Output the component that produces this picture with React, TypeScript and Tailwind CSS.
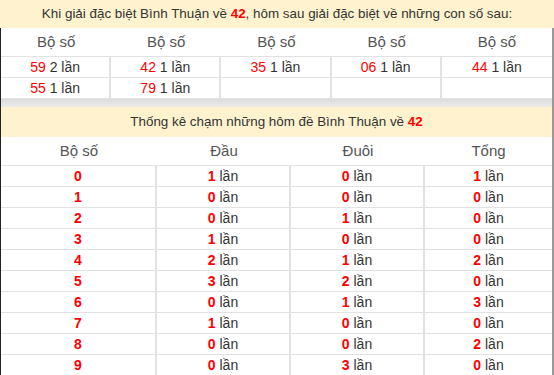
const firstRows: [string, string][][] = [
  [
    ['59', '2'],
    ['42', '1'],
    ['35', '1'],
    ['06', '1'],
    ['44', '1']
  ],
  [
    ['55', '1'],
    ['79', '1']
  ]
]

const stats = [
  ['0', '1', '0', '1'],
  ['1', '0', '0', '0'],
  ['2', '0', '1', '0'],
  ['3', '1', '0', '0'],
  ['4', '2', '1', '2'],
  ['5', '3', '2', '0'],
  ['6', '0', '1', '3'],
  ['7', '1', '0', '0'],
  ['8', '0', '0', '2'],
  ['9', '0', '3', '0']
]

const Count = ({ n }: { n: string }) => (
  <span>
    <span className="text-[#ff0000] font-bold">{n}</span>{' '}
    <span className="text-[#333]">lần</span>
  </span>
)

export default function App() {
  return (
    <div className="w-[554px] h-[375px] overflow-hidden bg-white text-[14px] font-['Liberation_Sans',Arial,sans-serif]">
      <div className="h-[28px] bg-[#fff3cf] flex items-center justify-center text-[13.4px] text-[#333]">
        Khi giải đặc biệt Bình Thuận về&nbsp;
        <span className="text-[#ff0000] font-bold">42</span>, hôm sau giải đặc biệt về những con số sau:
      </div>
      <div className="border-l border-l-[#222] border-r-2 border-r-[#999] w-[554px]">
        <div className="grid grid-cols-5 h-[29px] items-center text-center text-[15px] text-[#555] border-b border-[#e2e2e2]">
          {[0, 1, 2, 3, 4].map((i) => (
            <div key={i}>Bộ số</div>
          ))}
        </div>
        {firstRows.map((row, r) => (
          <div key={r} className="grid grid-cols-5 h-[21px] border-b border-[#e2e2e2]">
            {[0, 1, 2, 3, 4].map((c) => (
              <div
                key={c}
                className={
                  'flex items-center justify-center ' +
                  (c < 4 ? 'border-r-2 border-[#e2e2e2]' : '')
                }
              >
                {row[c] && (
                  <span>
                    <span className="text-[#ff0000]">{row[c][0]}</span>{' '}
                    <span className="text-[#333]">{row[c][1]} lần</span>
                  </span>
                )}
              </div>
            ))}
          </div>
        ))}
        <div className="h-[8px] bg-gradient-to-b from-[#dcdcdc] to-[#ececec]" />
        <div className="h-[30px] bg-[#fff3cf] flex items-center justify-center text-[13.4px] text-[#333]">
          Thống kê chạm những hôm đề Bình Thuận về&nbsp;
          <span className="text-[#ff0000] font-bold">42</span>
        </div>
        <div className="grid grid-cols-[156px_134px_134px_1fr] h-[29px] items-center text-center text-[15px] text-[#555] border-b border-[#e2e2e2]">
          <div>Bộ số</div>
          <div>Đầu</div>
          <div>Đuôi</div>
          <div>Tổng</div>
        </div>
        {stats.map((s) => (
          <div
            key={s[0]}
            className="grid grid-cols-[156px_134px_134px_1fr] h-[21px] border-b border-[#e2e2e2]"
          >
            <div className="flex items-center justify-center border-r-2 border-[#e2e2e2] text-[#ff0000] font-bold">
              {s[0]}
            </div>
            <div className="flex items-center justify-center border-r-2 border-[#e2e2e2]">
              <Count n={s[1]} />
            </div>
            <div className="flex items-center justify-center border-r-2 border-[#e2e2e2]">
              <Count n={s[2]} />
            </div>
            <div className="flex items-center justify-center">
              <Count n={s[3]} />
            </div>
          </div>
        ))}
      </div>
    </div>
  )
}
